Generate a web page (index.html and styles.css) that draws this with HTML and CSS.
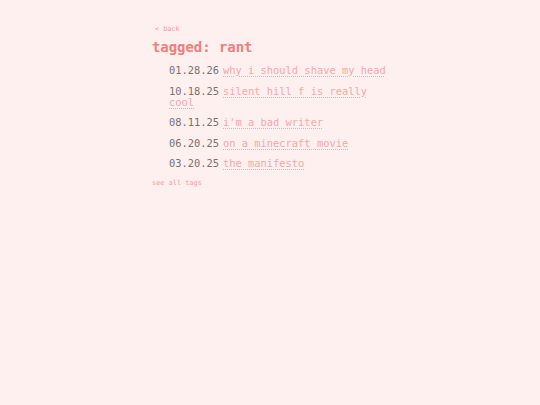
FILE: index.html
```html
<!DOCTYPE html>
<html>
<head>
<meta charset="utf-8">
<link rel="stylesheet" href="styles.css">
</head>
<body>
<main class="page">
  <a class="back" href="#">&lt; back</a>
  <h1 class="title">tagged: rant</h1>
  <ul class="posts">
    <li><span class="date">01.28.26</span><a href="#">why i should shave my head</a></li>
    <li><span class="date">10.18.25</span><a href="#">silent hill f is really cool</a></li>
    <li><span class="date">08.11.25</span><a href="#">i'm a bad writer</a></li>
    <li><span class="date">06.20.25</span><a href="#">on a minecraft movie</a></li>
    <li><span class="date">03.20.25</span><a href="#">the manifesto</a></li>
  </ul>
  <a class="tags" href="#">see all tags</a>
</main>
</body>
</html>
```
FILE: styles.css
```css
html, body {
  margin: 0;
  padding: 0;
  background: #fff0f0;
}
body {
  font-family: "DejaVu Sans Mono", "Liberation Mono", monospace;
}
.page {
  width: 240px;
  margin-left: 152px;
  padding-top: 24px;
  display: flex;
  flex-direction: column;
  align-items: flex-start;
}
.back {
  font-size: 6.8px;
  color: #f49a9a;
  text-decoration: none;
  margin-left: 3px;
  line-height: 10px;
}
.title {
  font-size: 13.9px;
  font-weight: bold;
  color: #f27c7c;
  margin: 4px 0 0 0;
  line-height: 18px;
}
.posts {
  list-style: none;
  margin: 9px 0 0 0;
  padding: 0 0 0 17px;
  display: flex;
  flex-direction: column;
  gap: 9.5px;
}
.posts li {
  font-size: 10.4px;
  line-height: 11px;
}
.date {
  color: #7a7070;
  margin-right: 4px;
}
.posts a {
  color: #f4a8a8;
  text-decoration: underline dotted;
  text-underline-offset: 2px;
}
.tags {
  font-size: 6.9px;
  color: #f49a9a;
  text-decoration: none;
  margin-top: 9px;
  line-height: 10px;
}
```
